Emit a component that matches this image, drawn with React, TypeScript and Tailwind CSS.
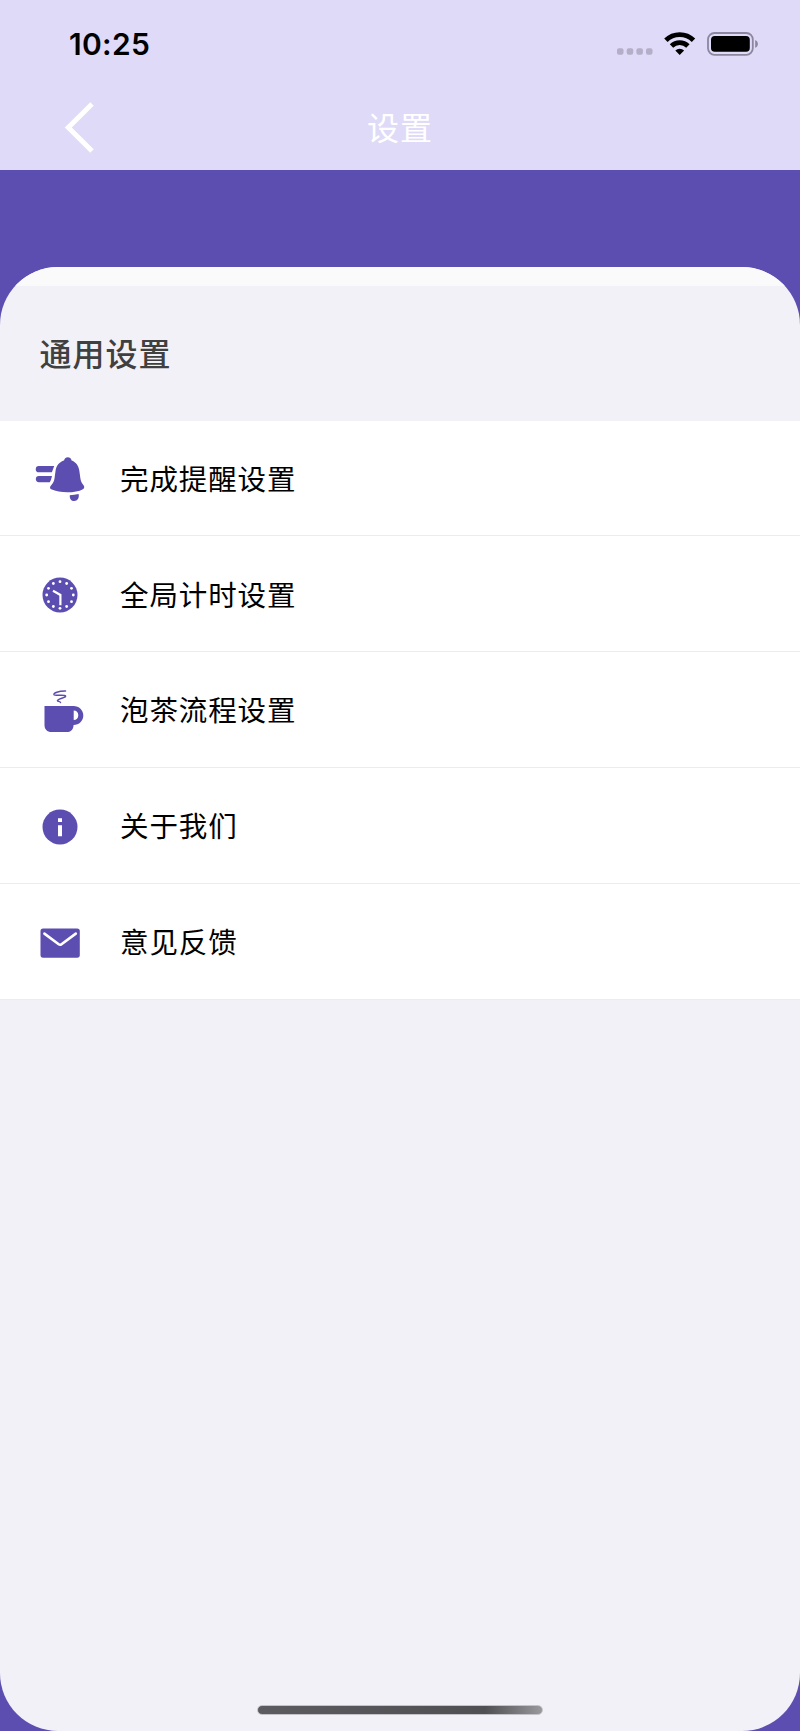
import type { ReactNode } from "react";

const BellIcon = () => (
  <svg className="h-[52px] w-[60px] shrink-0" viewBox="30 452 60 52" fill="#5c4db0">
    <path d="M38.900 466H54.200L51.900 472.300H38.900a3.150 3.150 0 0 1 0-6.300Z" />
    <path d="M38.900 476H52L51 479.800 49.800 482.200H38.900a3.100 3.100 0 0 1 0-6.200Z" />
    <path d="M64 460.400c.7-2 2-3.200 3.800-3.200s3.300 1.200 3.800 3.200c4 1.300 7 4.800 7.700 10.200l1.100 8c.5 3.500 1.700 5 3.300 6.900.9 1.100.7 2.800-.8 3.700C79 491.400 73.500 492.300 67.500 492.300c-6.200 0-11.800-1-16.300-3-1.400-.7-1.500-2.400-.4-3.600 2.200-2.300 3.300-4.200 3.700-7.100l1.100-8c.7-5.400 4-8.900 8.400-10.200Z" />
    <path d="M69.800 495.200c3-.1 5.800-.5 8.800-1.200.9 4-1.100 7-4.400 7-2.900 0-4.800-2.300-4.400-5.800Z" />
  </svg>
);

const dots = Array.from({ length: 12 }, (_, i) => ({
  x: 30 + 13.3 * Math.sin((i * Math.PI) / 6),
  y: 27 - 13.3 * Math.cos((i * Math.PI) / 6),
}));

const ClockIcon = () => (
  <svg className="h-[52px] w-[60px] shrink-0" viewBox="0 0 60 52">
    <circle cx="30" cy="27" r="17.500" fill="#5c4db0" />
    {dots.map((d, i) => (
      <circle key={i} cx={d.x} cy={d.y} r="1.400" fill="#fff" />
    ))}
    <path d="M23 22.800 30.400 27V37.300" fill="none" stroke="#fff" strokeWidth="2.200" />
  </svg>
);

const CupIcon = () => (
  <svg className="h-[52px] w-[60px] shrink-0" viewBox="30 683.7 60 52">
    <path fill="#5c4db0" fillRule="evenodd" d="M44.500 705.600H73.500c5.600 0 9.800 4.200 9.800 9.500s-4.200 9.500-9.700 9.500c-.2 4.400-2.700 7.200-7 7.200H51.500c-4.400 0-7-2.700-7-7V705.600ZM73.700 710.300V719.800c2.800 0 4.600-2 4.600-4.800s-1.800-4.700-4.600-4.700Z" />
    <path d="M65.500 690.800C58.500 690.700 53.300 692.700 54 694.300c.8 1.500 10.500-.3 11.500 1.200 1 1.700-7.400 2.800-8 4.700-.3 1.200 2.800.5 3 2" fill="none" stroke="#5c4db0" strokeWidth="1.500" strokeLinecap="round" />
  </svg>
);

const InfoIcon = () => (
  <svg className="h-[52px] w-[60px] shrink-0" viewBox="0 0 60 52">
    <circle cx="30" cy="27" r="17.500" fill="#5c4db0" />
    <path d="M28 18.300h4v3.800h-4zM28 25.300h4v11h-4z" fill="#fff" />
  </svg>
);

const MailIcon = () => (
  <svg className="h-[52px] w-[60px] shrink-0" viewBox="0 0 60 52">
    <rect x="10.500" y="13.500" width="39.300" height="29.200" rx="2.600" fill="#5c4db0" />
    <path d="M14.400 18.600 28.700 29.200a2.300 2.300 0 0 0 2.800 0L45.800 18.600" fill="none" stroke="#fff" strokeWidth="2.600" strokeLinecap="round" />
  </svg>
);

const rows: { label: string; icon: ReactNode }[] = [
  { label: "完成提醒设置", icon: <BellIcon /> },
  { label: "全局计时设置", icon: <ClockIcon /> },
  { label: "泡茶流程设置", icon: <CupIcon /> },
  { label: "关于我们", icon: <InfoIcon /> },
  { label: "意见反馈", icon: <MailIcon /> },
];

function StatusBar() {
  return (
    <div className="flex h-[88px] items-center justify-between pr-[41px] pl-[69px]">
      <span className="font-['Inter',sans-serif] text-[30px] leading-none font-semibold tracking-[0.3px]">10:25</span>
      <svg className="h-[26px] w-[144px]" viewBox="615 31 144 26">
        <g fill="#b4aec8">
          <rect x="617" y="48.300" width="6.500" height="6.500" rx="2" />
          <rect x="626.700" y="48.300" width="6.500" height="6.500" rx="2" />
          <rect x="636.400" y="48.300" width="6.500" height="6.500" rx="2" />
          <rect x="646" y="48.300" width="6.500" height="6.500" rx="2" />
        </g>
        <g fill="none" stroke="#000" strokeWidth="4.800">
          <path d="M665.900 40.300a19.400 19.400 0 0 1 27.600 0" />
          <path d="M671.500 46a11.600 11.600 0 0 1 16.400 0" />
        </g>
        <path d="M679.700 55 675.300 50.600a6.200 6.200 0 0 1 8.800 0Z" />
        <rect x="708" y="33" width="44.800" height="21.800" rx="6.500" fill="none" stroke="#8c869f" strokeWidth="1.800" />
        <rect x="711" y="36" width="38.800" height="15.800" rx="3.800" />
        <path d="M755.200 40v7.800c1.700-.7 2.700-2.200 2.700-3.900s-1-3.200-2.700-3.900Z" fill="#8c869f" />
      </svg>
    </div>
  );
}

export default function App() {
  return (
    <div className="flex h-[1731px] w-[800px] flex-col overflow-hidden bg-[#5c4db0] font-['Noto_Sans_CJK_SC',sans-serif]">
      <header className="h-[170px] shrink-0 bg-[#dfdaf7]">
        <StatusBar />
        <div className="grid h-[78px] grid-cols-3 items-center">
          <svg className="ml-[62px] h-[52px] w-[34px]" viewBox="62 101 34 52" fill="none" stroke="#fff" strokeWidth="5">
            <path d="M92 104 68.300 127.500 92 151" />
          </svg>
          <h1 className="pb-[2px] text-center text-[32px] leading-none tracking-[1px] text-white">设置</h1>
        </div>
      </header>
      <main className="mt-[96.5px] flex flex-1 flex-col overflow-hidden rounded-[58px] bg-[#f2f1f8]">
        <div className="h-[19.5px] shrink-0 bg-[#fafafa]" />
        <h2 className="flex h-[134.6px] shrink-0 items-center pb-[3px] pl-[39.5px] text-[32px] leading-none font-medium tracking-[1px] text-[#404040]">通用设置</h2>
        <ul className="shrink-0 bg-white">
          {rows.map((row) => (
            <li key={row.label} className="flex h-[115.85px] items-center border-b border-[#ececef] pl-[30px]">
              {row.icon}
              <span className="ml-[30px] text-[28.5px] leading-none tracking-[0.9px] text-black">{row.label}</span>
            </li>
          ))}
        </ul>
        <div className="mx-auto mt-auto mb-[16px] h-[10px] w-[286px] shrink-0 rounded-full border border-[#c4c4c8] bg-linear-to-r from-[#5c5c60] via-[#505053] via-80% to-[#9a9a9e]" />
      </main>
    </div>
  );
}
